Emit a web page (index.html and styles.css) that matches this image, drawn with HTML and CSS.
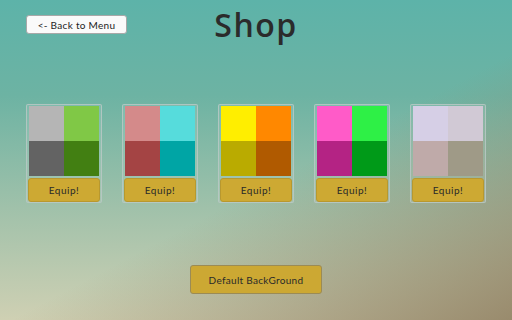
FILE: index.html
```html
<!DOCTYPE html>
<html>
<head>
<meta charset="utf-8">
<link rel="stylesheet" href="styles.css">
</head>
<body>
<div class="page">
  <header class="header">
    <div class="header-left"><button class="back-btn">&lt;- Back to Menu</button></div>
    <h1 class="title">Shop</h1>
    <div class="header-right"></div>
  </header>
  <section class="cards">
    <div class="card">
      <div class="swatch">
        <span style="background:#b5b5b5"></span><span style="background:#80c846"></span>
        <span style="background:#636363"></span><span style="background:#427f12"></span>
      </div>
      <button class="equip">Equip!</button>
    </div>
    <div class="card">
      <div class="swatch">
        <span style="background:#d48a8a"></span><span style="background:#56dcdc"></span>
        <span style="background:#a44444"></span><span style="background:#00a5a5"></span>
      </div>
      <button class="equip">Equip!</button>
    </div>
    <div class="card">
      <div class="swatch">
        <span style="background:#ffee00"></span><span style="background:#ff8800"></span>
        <span style="background:#baab00"></span><span style="background:#b05a00"></span>
      </div>
      <button class="equip">Equip!</button>
    </div>
    <div class="card">
      <div class="swatch">
        <span style="background:#ff5bc8"></span><span style="background:#2ef046"></span>
        <span style="background:#b42384"></span><span style="background:#009a18"></span>
      </div>
      <button class="equip">Equip!</button>
    </div>
    <div class="card">
      <div class="swatch">
        <span style="background:#d6cfe6"></span><span style="background:#d1c9d5"></span>
        <span style="background:#bfaaa9"></span><span style="background:#9f9a87"></span>
      </div>
      <button class="equip">Equip!</button>
    </div>
  </section>
  <div class="footer">
    <button class="default-btn">Default BackGround</button>
  </div>
</div>
</body>
</html>
```
FILE: styles.css
```css
html, body {
  margin: 0;
  padding: 0;
  width: 512px;
  height: 320px;
  overflow: hidden;
}
body {
  font-family: "Lato", "Liberation Sans", sans-serif;
  background:
    linear-gradient(152deg, rgba(150,135,105,0) 55%, rgba(150,135,105,0.95) 100%),
    linear-gradient(180deg, #5db3a9 0%, #6db3a3 30%, #a0c1aa 65%, #cfd0b3 100%);
}
.page {
  width: 512px;
  height: 320px;
  display: flex;
  flex-direction: column;
}
.header {
  display: grid;
  grid-template-columns: 1fr auto 1fr;
  align-items: start;
  padding: 0 26px;
  height: 104px;
}
.back-btn {
  margin-top: 15px;
  width: 101px;
  height: 19px;
  padding: 0;
  background: #fafafa;
  border: 1px solid #a8a8a8;
  border-radius: 3px;
  font-family: "Lato", "Liberation Sans", sans-serif;
  font-size: 10px;
  color: #222;
  letter-spacing: 0.3px;
}
.title {
  margin: 3px 0 0;
  font-family: "Open Sans", "Liberation Sans", sans-serif;
  font-weight: 600;
  font-size: 32px;
  line-height: 44px;
  letter-spacing: 1.5px;
  color: #2b2b2b;
}
.cards {
  display: flex;
  justify-content: center;
  gap: 20px;
}
.card {
  width: 72px;
  padding: 1px 1px 0;
  border: 1px solid rgba(185, 200, 196, 0.85);
  border-radius: 2px;
  background: rgba(255, 255, 255, 0.1);
  display: flex;
  flex-direction: column;
  align-items: center;
  gap: 2px;
}
.swatch {
  width: 70px;
  height: 70px;
  display: grid;
  grid-template-columns: 1fr 1fr;
  grid-template-rows: 1fr 1fr;
}
.equip {
  width: 72px;
  height: 24px;
  padding: 0;
  background: #cda933;
  border: 1px solid #b8982f;
  border-radius: 3px;
  font-family: "Lato", "Liberation Sans", sans-serif;
  font-size: 10px;
  font-weight: 400;
  letter-spacing: 0.5px;
  color: #2a2a2a;
}
.footer {
  display: flex;
  justify-content: center;
  margin-top: 62px;
}
.default-btn {
  width: 132px;
  height: 29px;
  padding: 0;
  background: #cca833;
  border: 1px solid #9b8b55;
  border-radius: 3px;
  font-family: "Lato", "Liberation Sans", sans-serif;
  font-size: 10px;
  font-weight: 400;
  letter-spacing: 0.3px;
  color: #2a2a2a;
}
```
